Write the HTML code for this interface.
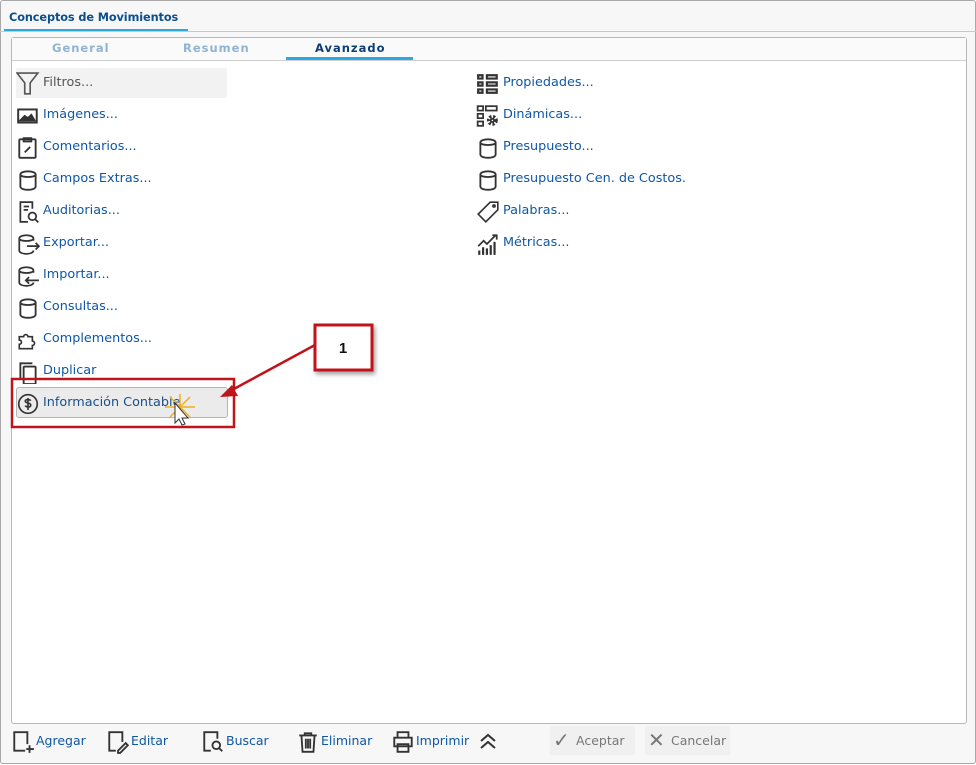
<!DOCTYPE html>
<html><head><meta charset="utf-8"><style>
*{margin:0;padding:0;box-sizing:border-box}
body{width:976px;height:765px;background:#fff;font-family:"DejaVu Sans","Liberation Sans",sans-serif;position:relative;overflow:hidden}
.frame{position:absolute;left:0;top:0;width:976px;height:764px;border:1px solid #a8a8a8;border-radius:3px;background:#f7f7f7}
.title{position:absolute;left:4px;top:8px;width:184px;height:24px;font-weight:bold;font-size:11.3px;color:#0b4f8f;padding-left:5px;line-height:20px;border-bottom:3px solid #29aae1;white-space:nowrap;letter-spacing:-0.1px}
.hline{position:absolute;left:0;top:31px;width:976px;height:1px;background:#c8c8c8}
.panel{position:absolute;left:11px;top:37px;width:956px;height:687px;border:1px solid #b8b8b8;border-radius:3px;background:#fff}
.tabs{position:absolute;left:0;top:0;width:954px;height:23px;border-bottom:1px solid #cfcfcf;background:#fafafa}
.tab{position:absolute;top:3px;font-size:11.5px;font-weight:bold;letter-spacing:1px;color:#8fb3d4;text-align:center}
.tab.act{color:#0b3f7a}
.uline{position:absolute;left:274px;top:19px;width:127px;height:3px;background:#29aae1}
.it{position:absolute;height:26px;font-size:12.8px;color:#0f57a6;line-height:26px;white-space:nowrap}
.it svg{position:absolute;left:-27px;top:2px}
.filt{position:absolute;left:16px;top:68px;width:211px;height:30px;background:#f2f2f2;border-radius:2px}
.btn{position:absolute;left:16px;top:387px;width:212px;height:31px;background:#ebebeb;border:1px solid #b5b5b5;border-radius:3px}
.foot{position:absolute;top:730px;font-size:12.5px;color:#0f57a6;line-height:22px}
.foot svg{position:absolute;left:-25px;top:0px}
.gbtn{position:absolute;top:726px;height:29px;background:#f0f0f0;font-size:12.5px;color:#777;line-height:29px}
</style></head><body>
<div class="frame"></div>
<div class="title">Conceptos de Movimientos</div>
<div class="hline"></div>
<div class="panel">
 <div class="tabs">
  <div class="tab" style="left:40px">General</div>
  <div class="tab" style="left:171px">Resumen</div>
  <div class="tab act" style="left:303px">Avanzado</div>
  <div class="uline"></div>
 </div>
</div>
<div class="filt"></div>
<div class="btn"></div>
<div class="it" style="left:43px;top:70px;color:#555">Filtros...<svg width="24" height="24" viewBox="0 0 22 22" fill="none" stroke="#555" stroke-width="1.5"><path d="M1 1h19l-7 9v10h-5v-10z"/></svg></div>
<div class="it" style="left:43px;top:102px">Imágenes...<svg width="24" height="24" viewBox="0 0 22 22" fill="none" stroke="#333" stroke-width="1.8"><rect x="2" y="5" width="17" height="12"/><path d="M4 15l4-4 3 2 3-3 3 5z" fill="#333"/></svg></div>
<div class="it" style="left:43px;top:134px">Comentarios...<svg width="24" height="24" viewBox="0 0 22 22" fill="none" stroke="#333" stroke-width="1.7"><rect x="3" y="3" width="15" height="17" rx="1"/><path d="M7 2h7v3h-7z"/><path d="M8 15l5-5"/></svg></div>
<div class="it" style="left:43px;top:166px">Campos Extras...<svg width="24" height="24" viewBox="0 0 22 22" fill="none" stroke="#333" stroke-width="1.7"><path d="M4 6c0-4 14-4 14 0v11c0 4-14 4-14 0z M4 6c0 3 14 3 14 0"/></svg></div>
<div class="it" style="left:43px;top:198px">Auditorias...<svg width="24" height="24" viewBox="0 0 22 22" fill="none" stroke="#333" stroke-width="1.6"><path d="M15 8V2H4v18h7"/><path d="M7 6h5M7 9h4"/><circle cx="15" cy="15" r="3.5"/><path d="M17.5 17.5l3 3"/></svg></div>
<div class="it" style="left:43px;top:230px">Exportar...<svg width="24" height="24" viewBox="0 0 22 22" fill="none" stroke="#333" stroke-width="1.6"><path d="M16 8V6c0-4-13-4-13 0v11c0 4 13 4 13 0M3 6c0 3 13 3 13 0M10 13h11M18 10l3 3-3 3"/></svg></div>
<div class="it" style="left:43px;top:262px">Importar...<svg width="24" height="24" viewBox="0 0 22 22" fill="none" stroke="#333" stroke-width="1.6"><path d="M16 8V6c0-4-13-4-13 0v11c0 4 13 4 13 0M3 6c0 3 13 3 13 0M9 15h12M12 12l-3 3 3 3"/></svg></div>
<div class="it" style="left:43px;top:294px">Consultas...<svg width="24" height="24" viewBox="0 0 22 22" fill="none" stroke="#333" stroke-width="1.7"><path d="M4 6c0-4 14-4 14 0v11c0 4-14 4-14 0z M4 6c0 3 14 3 14 0"/></svg></div>
<div class="it" style="left:43px;top:326px">Complementos...<svg width="24" height="24" viewBox="0 0 22 22" fill="none" stroke="#333" stroke-width="1.5"><path d="M3 8h4a2 2 0 1 1 4 0h4v4a2 2 0 1 1 0 4v3H3v-4a2 2 0 1 0 0-4z"/></svg></div>
<div class="it" style="left:43px;top:358px">Duplicar<svg width="24" height="24" viewBox="0 0 22 22" fill="none" stroke="#333" stroke-width="1.7"><path d="M4 17V3h11"/><rect x="7" y="6" width="11" height="16" rx="1"/></svg></div>
<div class="it" style="left:43px;top:390px;color:#1a4f8a">Información Contable<svg width="24" height="24" viewBox="0 0 22 22" fill="none" stroke="#333" stroke-width="1.5"><circle cx="11" cy="11" r="8.5"/><path d="M13.5 8c-1-1.5-5-1.5-5 .5s5 1 5 3.5-4 2-5 .5M11 5.5v11"/></svg></div>

<div class="it" style="left:503px;top:70px">Propiedades...<svg width="24" height="24" viewBox="0 0 22 22" fill="#333" stroke="none"><path d="M1 2h6v5H1zM9 2h11v5H9zM1 8.5h6v5H1zM9 8.5h11v5H9zM1 15h6v5H1zM9 15h11v5H9z"/><path d="M3 4h2v1H3zM11 4h7v1h-7zM3 10.5h2v1H3zM11 10.5h7v1h-7zM3 17h2v1H3zM11 17h7v1h-7z" fill="#fff"/></svg></div>
<div class="it" style="left:503px;top:102px">Dinámicas...<svg width="24" height="24" viewBox="0 0 22 22" fill="none" stroke="#333" stroke-width="1.6"><rect x="1.5" y="2" width="5" height="4"/><rect x="9" y="2" width="10" height="4"/><rect x="1.5" y="9" width="5" height="4"/><rect x="1.5" y="16" width="5" height="4"/><circle cx="15" cy="15" r="3.5" stroke-width="3" stroke-dasharray="2 1.4"/><circle cx="15" cy="15" r="1.5"/></svg></div>
<div class="it" style="left:503px;top:134px">Presupuesto...<svg width="24" height="24" viewBox="0 0 22 22" fill="none" stroke="#333" stroke-width="1.7"><path d="M4 6c0-4 14-4 14 0v11c0 4-14 4-14 0z M4 6c0 3 14 3 14 0"/></svg></div>
<div class="it" style="left:503px;top:166px">Presupuesto Cen. de Costos.<svg width="24" height="24" viewBox="0 0 22 22" fill="none" stroke="#333" stroke-width="1.7"><path d="M4 6c0-4 14-4 14 0v11c0 4-14 4-14 0z M4 6c0 3 14 3 14 0"/></svg></div>
<div class="it" style="left:503px;top:198px">Palabras...<svg width="24" height="24" viewBox="0 0 22 22" fill="none" stroke="#333" stroke-width="1.5"><path d="M13 2h7v7L9 20 2 13z"/><circle cx="16.5" cy="5.5" r="1"/></svg></div>
<div class="it" style="left:503px;top:230px">Métricas...<svg width="24" height="24" viewBox="0 0 22 22" fill="#333" stroke="none"><path d="M2 17h2v4H2zM5.5 14h2v7h-2zM9 15h2v6H9zM12.5 12h2v9h-2zM16 9h2v12h-2z"/><path d="M2 13l5-5 3 3 8-8M15 3h4v4" fill="none" stroke="#333" stroke-width="1.6"/></svg></div>

<svg width="976" height="765" style="position:absolute;left:0;top:0;pointer-events:none">
 <rect x="12" y="379" width="222" height="48" fill="none" stroke="#c0141c" stroke-width="2.5"/>
 <rect x="315" y="325" width="57" height="45" fill="#fff" stroke="#c0141c" stroke-width="3" style="filter:drop-shadow(2px 3px 2px rgba(0,0,0,.35))"/>
 <text x="343" y="353" font-family="Liberation Sans" font-weight="bold" font-size="15" fill="#111" text-anchor="middle">1</text>
 <line x1="315" y1="345" x2="232" y2="390" stroke="#c0141c" stroke-width="2.5"/>
 <path d="M220 397l18-1-6-11z" fill="#c0141c"/>
 <g stroke="#f0b020" stroke-width="1.5"><path d="M165 407h30M180 394v26M170 397l20 20M190 397l-20 20"/></g>
 <path d="M175 403v20l4-4 3 6 3-1-3-6h6z" fill="#fff" stroke="#333" stroke-width="1"/>
</svg>

<div class="foot" style="left:36px">Agregar<svg width="24" height="24" viewBox="0 0 22 22" fill="none" stroke="#333" stroke-width="1.7"><path d="M13 19H3V2h12v11M17 14v7M14 17.5h7"/></svg></div>
<div class="foot" style="left:131px">Editar<svg width="24" height="24" viewBox="0 0 22 22" fill="none" stroke="#333" stroke-width="1.7"><path d="M9 19H3V2h12v9M11 19l7-7 2 2-7 7h-2z"/></svg></div>
<div class="foot" style="left:226px">Buscar<svg width="24" height="24" viewBox="0 0 22 22" fill="none" stroke="#333" stroke-width="1.7"><path d="M9 19H3V2h12v6"/><circle cx="14" cy="14" r="3.5"/><path d="M16.5 16.5l3 3"/></svg></div>
<div class="foot" style="left:321px">Eliminar<svg width="24" height="24" viewBox="0 0 22 22" fill="none" stroke="#333" stroke-width="1.7"><path d="M3 5h16M8 5V3h6v2M5 5l1 15h10l1-15M9 8v9M11 8v9M13 8v9"/></svg></div>
<div class="foot" style="left:416px">Imprimir<svg width="24" height="24" viewBox="0 0 22 22" fill="none" stroke="#333" stroke-width="1.7"><path d="M6 7V2h10v5M3 7h16v8H3zM6 13h10v7H6z"/></svg></div>
<svg width="22" height="22" viewBox="0 0 22 22" style="position:absolute;left:477px;top:730px" fill="none" stroke="#333" stroke-width="2"><path d="M4 11l7-6 7 6M4 18l7-6 7 6"/></svg>
<div class="gbtn" style="left:550px;width:85px"><span style="position:absolute;left:3px;font-size:20px;color:#777">✓</span><span style="position:absolute;left:26px">Aceptar</span></div>
<div class="gbtn" style="left:645px;width:85px"><span style="position:absolute;left:3px;font-size:20px;color:#777">✕</span><span style="position:absolute;left:26px">Cancelar</span></div>
</body></html>
